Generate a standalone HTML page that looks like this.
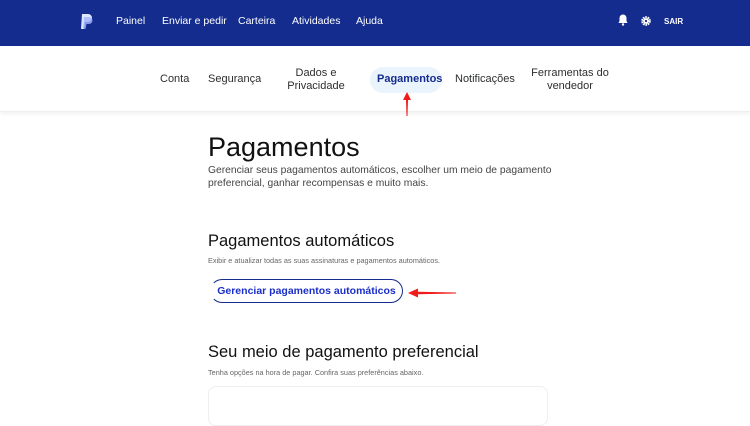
<!DOCTYPE html>
<html><head><meta charset="utf-8"><style>
*{margin:0;padding:0;box-sizing:border-box}
body{width:750px;height:404px;overflow:hidden;background:#fff;font-family:"Liberation Sans",sans-serif;color:#2c2e2f;position:relative}
.top{position:absolute;left:0;top:0;width:750px;height:46px;background:#142c8e}
.top a{position:absolute;top:15px;color:#fff;font-size:10.5px}
.sub{position:absolute;left:0;top:46px;width:750px;height:66px;background:#fff;box-shadow:0 2px 4px rgba(0,0,0,.06);border-bottom:1px solid #eee}
.sub span{position:absolute;font-size:11px;color:#2c2e2f;text-align:center;line-height:13px}
.pill{position:absolute;left:370px;top:67px;width:72px;height:26px;border-radius:13px;background:#eaf4fc}
h1{position:absolute;left:208px;top:132px;font-size:27px;font-weight:normal;color:#111}
.t{position:absolute;left:208px;font-size:10.3px;color:#444;line-height:13px}
h2{position:absolute;left:208px;font-size:16.5px;font-weight:normal;color:#111}
.s{position:absolute;left:208px;font-size:7.3px;color:#666}
.btn{position:absolute;left:210px;top:279px;width:193px;height:24px;border:1.5px solid #142c8e;border-left-color:transparent;border-radius:12px;color:#1a2fc7;font-weight:bold;font-size:10.5px;text-align:center;line-height:22px}
.card{position:absolute;left:208px;top:386px;width:340px;height:40px;border:1px solid #eee;border-radius:8px}
</style></head><body>
<div class="top">
<svg style="position:absolute;left:80px;top:13px" width="14" height="17" viewBox="0 0 14 17"><path d="M2 1h6a4 4 0 0 1 0 8H5l-1 7H1z" fill="#dfe6ff"/><path d="M4 4h5a3.5 3.5 0 0 1 0 7H6.5l-1 5H3z" fill="#9fb4ff" opacity=".8"/></svg>
<a style="left:116px">Painel</a><a style="left:162px">Enviar e pedir</a><a style="left:238px">Carteira</a><a style="left:292px">Atividades</a><a style="left:356px">Ajuda</a>
<svg style="position:absolute;left:618px;top:14px" width="10" height="12" viewBox="0 0 10 12"><path d="M5 0.5a3.5 3.5 0 0 0-3.5 3.5v3L0.5 9h9L8.5 7V4A3.5 3.5 0 0 0 5 0.5z" fill="#fff"/><circle cx="5" cy="10.5" r="1.2" fill="#fff"/></svg>
<svg style="position:absolute;left:641px;top:16px" width="10" height="10" viewBox="0 0 10 10"><circle cx="5" cy="5" r="3.6" fill="none" stroke="#fff" stroke-width="2.4" stroke-dasharray="1.6 0.7"/><circle cx="5" cy="5" r="2.6" fill="#fff"/><circle cx="5" cy="5" r="1.1" fill="#142c8e"/></svg>
<a style="left:664px;font-weight:bold;font-size:8px;top:17px">SAIR</a>
</div>
<div class="sub"></div>
<div class="pill"></div>
<div class="sub" style="background:none;box-shadow:none;border:none">
<span style="left:160px;top:27px">Conta</span>
<span style="left:208px;top:27px">Segurança</span>
<span style="left:286px;top:21px;width:60px">Dados e Privacidade</span>
<span style="left:377px;top:27px;color:#142c8e;font-weight:bold">Pagamentos</span>
<span style="left:455px;top:27px">Notificações</span>
<span style="left:528px;top:21px;width:84px">Ferramentas do vendedor</span>
</div>
<svg style="position:absolute;left:402px;top:92px" width="10" height="24" viewBox="0 0 10 24"><path d="M5 0L9 8H6L5.5 24H4.5L4 8H1z" fill="#f01c1c"/></svg>
<h1>Pagamentos</h1>
<div class="t" style="top:164px">Gerenciar seus pagamentos automáticos, escolher um meio de pagamento<br>preferencial, ganhar recompensas e muito mais.</div>
<h2 style="top:232px">Pagamentos automáticos</h2>
<div class="s" style="top:256px">Exibir e atualizar todas as suas assinaturas e pagamentos automáticos.</div>
<div class="btn">Gerenciar pagamentos automáticos</div>
<svg style="position:absolute;left:408px;top:288px" width="48" height="10" viewBox="0 0 48 10"><path d="M0 5L10 0.5V3.8L48 4.5V5.5L10 6.2V9.5z" fill="#f01c1c"/></svg>
<h2 style="top:343px">Seu meio de pagamento preferencial</h2>
<div class="s" style="top:368px">Tenha opções na hora de pagar. Confira suas preferências abaixo.</div>
<div class="card"></div>
</body></html>
